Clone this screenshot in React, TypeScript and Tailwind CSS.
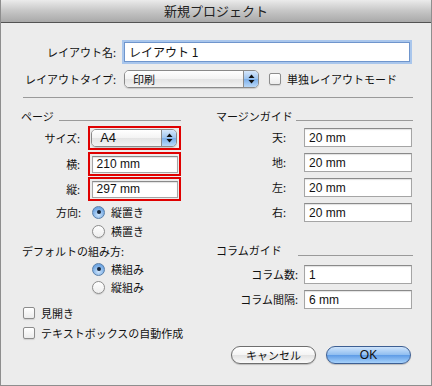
import React from "react";

const JP = { fontFamily: '"Noto Sans CJK JP", "Noto Sans", sans-serif' };
const LAT = { fontFamily: '"Liberation Sans", "Noto Sans CJK JP", sans-serif' };

function Arrows() {
  return (
    <svg width="7" height="10" viewBox="0 0 7 10">
      <path d="M3.5 0.5 L6.5 4 L0.5 4 Z" fill="#111" />
      <path d="M3.5 9.5 L6.5 6 L0.5 6 Z" fill="#111" />
    </svg>
  );
}

function Select({ text, w, h, latin }: { text: string; w: string; h: string; latin?: boolean }) {
  return (
    <div
      className={`${w} ${h} flex rounded-[5px] border border-[#8a8a8a] overflow-hidden shadow-[0_1px_1px_rgba(0,0,0,0.15)]`}
    >
      <div
        className="flex-1 flex items-center pl-[8px] text-[11px] text-[#111] bg-[linear-gradient(#ffffff,#f3f3f3_50%,#e4e4e4_51%,#f2f2f2)]"
        style={latin ? { fontFamily: '"Liberation Sans", sans-serif', fontSize: 13 } : JP}
      >
        {text}
      </div>
      <div className="w-[15px] flex items-center justify-center border-l border-[#8a8a8a] bg-[linear-gradient(#d6e7fb,#9cc4f0_50%,#7aaeea_51%,#b9d8f8)]">
        <Arrows />
      </div>
    </div>
  );
}

function Input({ value, w, h }: { value: string; w: string; h: string }) {
  return (
    <div
      className={`${w} ${h} bg-white border border-[#a5a5a5] border-t-[#8a8a8a] shadow-[inset_0_1px_1px_rgba(0,0,0,0.12)] flex items-center pl-[4px] text-[12px] text-[#111]`}
      style={LAT}
    >
      {value}
    </div>
  );
}

function Radio({ on }: { on?: boolean }) {
  return on ? (
    <div className="w-[13px] h-[13px] rounded-full border border-[#5a7fa8] bg-[radial-gradient(circle_at_50%_70%,#cfe5fb,#6fa6e3_70%)] flex items-center justify-center">
      <div className="w-[4px] h-[4px] rounded-full bg-[#15253a]" />
    </div>
  ) : (
    <div className="w-[13px] h-[13px] rounded-full border border-[#8c8c8c] bg-[linear-gradient(#ffffff,#ededed)] shadow-[0_1px_1px_rgba(0,0,0,0.12)]" />
  );
}

function Check() {
  return (
    <div className="w-[12px] h-[12px] rounded-[2px] border border-[#8c8c8c] bg-[linear-gradient(#ffffff,#ececec)] shadow-[0_1px_1px_rgba(0,0,0,0.12)]" />
  );
}

export default function App() {
  return (
    <div
      className="w-[432px] h-[386px] bg-[#ececec] border-l border-r border-b border-[#8e8e8e] text-[#111] text-[11px] flex flex-col"
      style={JP}
    >
      {/* title bar */}
      <div className="h-[23px] shrink-0 border-b border-[#535353] bg-[linear-gradient(#ebebeb,#c6c6c6_50%,#a9a9a9)] flex items-center justify-center text-[13px] text-[#222]">
        新規プロジェクト
      </div>

      {/* row 1 */}
      <div className="flex items-center h-[20px] mt-[19px]">
        <div className="w-[115px] text-right">レイアウト名:</div>
        <div className="ml-[8px] w-[286px] h-[20px] bg-white border border-[#6f95cc] shadow-[0_0_0_2px_#a9c6ec] flex items-center pl-[4px] text-[12px]">
          <span style={JP}>レイアウト 1</span>
        </div>
      </div>

      {/* row 2 */}
      <div className="flex items-center h-[18px] mt-[8px]">
        <div className="w-[115px] text-right">レイアウトタイプ:</div>
        <div className="ml-[8px]">
          <Select text="印刷" w="w-[135px]" h="h-[18px]" />
        </div>
        <div className="ml-[10px]">
          <Check />
        </div>
        <div className="ml-[6px]">単独レイアウトモード</div>
      </div>

      <div className="ml-[22px] w-[390px] h-px bg-[#9a9a9a] mt-[9px] shrink-0" />

      {/* columns */}
      <div className="flex mt-[11px]">
        {/* left column */}
        <div className="ml-[20px] w-[160px] flex flex-col">
          <div className="flex h-[14px] items-center">
            <span>ページ</span>
            <div className="flex-1 h-px bg-[#9a9a9a] ml-[5px] self-end mb-[2px]" />
          </div>

          <div className="flex items-center mt-[3px]">
            <div className="w-[60px] text-right">サイズ:</div>
            <div className="ml-[8px] w-[94px] h-[24px] border-2 border-[#e00000] p-[1px] flex items-center">
              <Select text="A4" w="w-[86px]" h="h-[18px]" latin />
            </div>
          </div>

          <div className="flex items-center mt-[2px]">
            <div className="w-[60px] text-right">横:</div>
            <div className="ml-[8px] w-[94px] h-[24px] border-2 border-[#e00000] p-[1px] flex items-center justify-center">
              <Input value="210 mm" w="w-[86px]" h="h-[17px]" />
            </div>
          </div>

          <div className="flex items-center mt-[1px]">
            <div className="w-[60px] text-right">縦:</div>
            <div className="ml-[8px] w-[94px] h-[24px] border-2 border-[#e00000] p-[1px] flex items-center justify-center">
              <Input value="297 mm" w="w-[86px]" h="h-[17px]" />
            </div>
          </div>

          <div className="flex items-center h-[16px] mt-[3px]">
            <div className="w-[60px] text-right">方向:</div>
            <div className="ml-[11px]">
              <Radio on />
            </div>
            <div className="ml-[6px]">縦置き</div>
          </div>
          <div className="flex items-center h-[16px] mt-[3px]">
            <div className="ml-[71px]">
              <Radio />
            </div>
            <div className="ml-[6px]">横置き</div>
          </div>

          <div className="flex items-center h-[14px] mt-[5px] ml-px">デフォルトの組み方:</div>
          <div className="flex items-center h-[16px] mt-[3px]">
            <div className="ml-[71px]">
              <Radio on />
            </div>
            <div className="ml-[6px]">横組み</div>
          </div>
          <div className="flex items-center h-[16px] mt-[2px]">
            <div className="ml-[71px]">
              <Radio />
            </div>
            <div className="ml-[6px]">縦組み</div>
          </div>

          <div className="flex items-center h-[16px] mt-[10px]">
            <div className="ml-[2px]">
              <Check />
            </div>
            <div className="ml-[6px]">見開き</div>
          </div>
          <div className="flex items-center h-[16px] mt-[4px]">
            <div className="ml-[2px]">
              <Check />
            </div>
            <div className="ml-[6px] whitespace-nowrap">テキストボックスの自動作成</div>
          </div>
        </div>

        {/* right column */}
        <div className="ml-[35px] w-[197px] flex flex-col">
          <div className="flex h-[14px] items-center">
            <span>マージンガイド</span>
            <div className="flex-1 h-px bg-[#9a9a9a] ml-[3px] self-end mb-[2px]" />
          </div>
          {["天", "地", "左", "右"].map((l, i) => (
            <div key={l} className={`flex items-center ${i === 0 ? "mt-[5px]" : "mt-[6px]"}`}>
              <div className="w-[70px] text-right">{l}:</div>
              <div className="ml-[18px]">
                <Input value="20 mm" w="w-[108px]" h="h-[19px]" />
              </div>
            </div>
          ))}

          <div className="flex h-[14px] items-center mt-[21px]">
            <span>コラムガイド</span>
            <div className="flex-1 h-px bg-[#9a9a9a] ml-[16px] self-end mb-[1px]" />
          </div>
          <div className="flex items-center mt-[8px]">
            <div className="w-[82px] text-right">コラム数:</div>
            <div className="ml-[6px]">
              <Input value="1" w="w-[108px]" h="h-[19px]" />
            </div>
          </div>
          <div className="flex items-center mt-[6px]">
            <div className="w-[82px] text-right">コラム間隔:</div>
            <div className="ml-[6px]">
              <Input value="6 mm" w="w-[108px]" h="h-[19px]" />
            </div>
          </div>
        </div>
      </div>

      {/* buttons */}
      <div className="flex justify-end gap-[10px] pr-[20px] mt-[5px]">
        <div className="w-[85px] h-[18px] rounded-full border border-[#6e6e6e] bg-[linear-gradient(#ffffff,#f4f4f4_50%,#e2e2e2_51%,#fafafa)] shadow-[0_1px_1px_rgba(0,0,0,0.2)] flex items-center justify-center text-[11px]">
          キャンセル
        </div>
        <div
          className="w-[85px] h-[18px] rounded-full border border-[#3d5f93] bg-[linear-gradient(#cfe4fb,#8fbdf0_50%,#5e9be6_51%,#a7d2fb)] shadow-[0_1px_1px_rgba(0,0,0,0.2)] flex items-center justify-center text-[12px]"
          style={LAT}
        >
          OK
        </div>
      </div>
    </div>
  );
}
